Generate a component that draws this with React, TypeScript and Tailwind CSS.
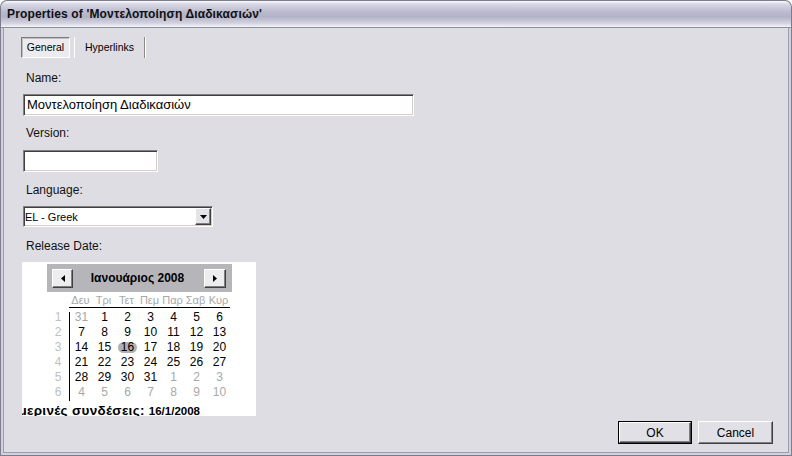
import React from "react";

const weeks: { d: number; o?: boolean }[][] = [
  [{ d: 31, o: true }, { d: 1 }, { d: 2 }, { d: 3 }, { d: 4 }, { d: 5 }, { d: 6 }],
  [{ d: 7 }, { d: 8 }, { d: 9 }, { d: 10 }, { d: 11 }, { d: 12 }, { d: 13 }],
  [{ d: 14 }, { d: 15 }, { d: 16 }, { d: 17 }, { d: 18 }, { d: 19 }, { d: 20 }],
  [{ d: 21 }, { d: 22 }, { d: 23 }, { d: 24 }, { d: 25 }, { d: 26 }, { d: 27 }],
  [{ d: 28 }, { d: 29 }, { d: 30 }, { d: 31 }, { d: 1, o: true }, { d: 2, o: true }, { d: 3, o: true }],
  [{ d: 4, o: true }, { d: 5, o: true }, { d: 6, o: true }, { d: 7, o: true }, { d: 8, o: true }, { d: 9, o: true }, { d: 10, o: true }],
];

const dayNames = ["Δευ", "Τρι", "Τετ", "Πεμ", "Παρ", "Σαβ", "Κυρ"];

function Sunken({ className, children }: { className: string; children?: React.ReactNode }) {
  return (
    <div
      className={
        "border border-t-[#808080] border-l-[#808080] border-b-white border-r-white shadow-[inset_1px_1px_0_#404040,inset_-1px_-1px_0_#d4d0c8] bg-white " +
        className
      }
    >
      {children}
    </div>
  );
}

function Raised({ className, children }: { className: string; children?: React.ReactNode }) {
  return (
    <div
      className={
        "border border-t-white border-l-white border-b-[#404040] border-r-[#404040] shadow-[inset_-1px_-1px_0_#808080] flex items-center justify-center " +
        className
      }
    >
      {children}
    </div>
  );
}

export default function App() {
  return (
    <div className="w-[792px] h-[456px] flex flex-col overflow-hidden bg-[#7c7c8e] rounded-t-[7px] font-['Liberation_Sans',Arial,sans-serif] text-black">
      {/* title bar */}
      <div className="h-[27px] shrink-0 mx-px mt-px rounded-t-[6px] bg-[linear-gradient(to_bottom,#fbfbfd_0%,#d8d8e4_12%,#bcbcd0_40%,#b2b2c8_60%,#d2d2e0_85%,#f4f4f8_100%)] flex items-center pl-[6px] border-b border-[#8e8ea0]">
        <span className="text-[12px] font-bold tracking-[0.15px] text-[#111]">
          Properties of 'Μοντελοποίηση Διαδικασιών'
        </span>
      </div>
      {/* body frame */}
      <div className="flex-1 flex flex-col px-px pb-px">
        <div className="flex-1 flex flex-col border-x-2 border-b-2 border-[#d2d2de]">
          <div className="flex-1 flex flex-col border-l border-r border-b border-[#9c9cae] bg-[#dedde4] pl-[19px] pr-[15px]">
            {/* tabs */}
            <div className="mt-[9px] h-[21px] flex items-stretch">
              <div className="w-[49px] -ml-[2px] flex items-center justify-center border border-t-[#7c7c7c] border-l-[#7c7c7c] border-b-white border-r-white bg-[#ececf0] text-[10.5px] shadow-[inset_1px_1px_0_#c0c0c0]">
                General
              </div>
              <div className="ml-[4px] w-[71px] flex items-center justify-center border-l border-r border-l-white border-r-[#8a8a8a] text-[10.5px] shadow-[1px_0_0_#ffffff]">
                Hyperlinks
              </div>
            </div>
            {/* Name */}
            <div className="mt-[13px] h-[14px] leading-[14px] text-[12px] pl-[3px] text-[#111]">Name:</div>
            <Sunken className="mt-[9px] h-[22px] w-[391px] flex items-center pl-[3px]">
              <span className="text-[13px] leading-[16px]">Μοντελοποίηση Διαδικασιών</span>
            </Sunken>
            {/* Version */}
            <div className="mt-[10px] h-[14px] leading-[14px] text-[12px] pl-[3px] text-[#111]">Version:</div>
            <Sunken className="mt-[10px] h-[22px] w-[135px]" />
            {/* Language */}
            <div className="mt-[11px] h-[14px] leading-[14px] text-[12px] pl-[3px] text-[#111]">Language:</div>
            <Sunken className="mt-[9px] h-[21px] w-[190px] flex items-center justify-between pl-[1px] pr-px">
              <span className="text-[11px] leading-[14px]">EL - Greek</span>
              <Raised className="w-[16px] h-[17px] bg-[#e4e4e8]">
                <svg width="7" height="4" viewBox="0 0 7 4">
                  <path d="M0 0h7L3.5 4z" fill="#000" />
                </svg>
              </Raised>
            </Sunken>
            {/* Release date */}
            <div className="mt-[12px] h-[14px] leading-[14px] text-[12px] pl-[3px] text-[#111]">Release Date:</div>
            {/* Calendar */}
            <div className="mt-[9px] h-[154px] w-[234px] -ml-px bg-white pt-[2px] flex flex-col overflow-hidden">
              <div className="ml-[25px] w-[185px] h-[28px] shrink-0 bg-[#b6b6ba] flex items-center justify-between pl-[5px] pr-[6px]">
                <Raised className="w-[21px] h-[19px] bg-[#ededf0]">
                  <svg width="4" height="7" viewBox="0 0 4 7">
                    <path d="M4 0v7L0 3.5z" fill="#000" />
                  </svg>
                </Raised>
                <span className="text-[12px] font-bold leading-[14px] -ml-[2px]">Ιανουάριος 2008</span>
                <Raised className="w-[22px] h-[19px] bg-[#ededf0]">
                  <svg width="4" height="7" viewBox="0 0 4 7">
                    <path d="M0 0v7L4 3.5z" fill="#000" />
                  </svg>
                </Raised>
              </div>
              <div className="ml-[25px] flex">
                <div className="w-[22px]" />
                <div className="w-[161px] h-[16px] flex border-b border-black">
                  {dayNames.map((n) => (
                    <div key={n} className="w-[23px] text-center text-[11px] leading-[16px] text-[#a8a8a8]">
                      {n}
                    </div>
                  ))}
                </div>
              </div>
              <div className="ml-[25px] flex">
                <div className="w-[22px] flex flex-col pt-[2px]">
                  {weeks.map((_, i) => (
                    <div key={i} className="h-[15px] text-center text-[12px] leading-[15px] text-[#c0c0c0]">
                      {i + 1}
                    </div>
                  ))}
                </div>
                <div className="flex flex-col mt-[4px] border-l border-black pb-[1px]">
                  <div className="-mt-[2px]">
                    {weeks.map((w, i) => (
                      <div key={i} className="flex h-[15px]">
                        {w.map((c, j) => (
                          <div key={j} className="w-[23px] h-[15px] flex items-center justify-center relative">
                            {i === 2 && c.d === 16 && (
                              <div className="absolute left-[2px] top-[2px] w-[19px] h-[11px] rounded-full bg-[#b0b0b0]" />
                            )}
                            <span
                              className={
                                "relative text-[12px] leading-[15px] " + (c.o ? "text-[#a8a8a8]" : "text-black")
                              }
                            >
                              {c.d}
                            </span>
                          </div>
                        ))}
                      </div>
                    ))}
                  </div>
                </div>
              </div>
              <div className="w-[178px] flex justify-end overflow-hidden mt-[1px]">
                <span className="whitespace-nowrap font-bold leading-[15px]">
                  <span className="text-[13.5px] tracking-[0.3px]">Σημερινές συνδέσεις: </span>
                  <span className="text-[11.5px]">16/1/2008</span>
                </span>
              </div>
            </div>
            {/* buttons */}
            <div className="mt-[5px] flex justify-end gap-[6px] pr-0">
              <div className="w-[74px] h-[23px] border border-black flex">
                <Raised className="flex-1 bg-[#e0e0e6] text-[12px]">OK</Raised>
              </div>
              <Raised className="w-[75px] h-[23px] bg-[#e0e0e6] text-[12px]">Cancel</Raised>
            </div>
          </div>
        </div>
      </div>
    </div>
  );
}
